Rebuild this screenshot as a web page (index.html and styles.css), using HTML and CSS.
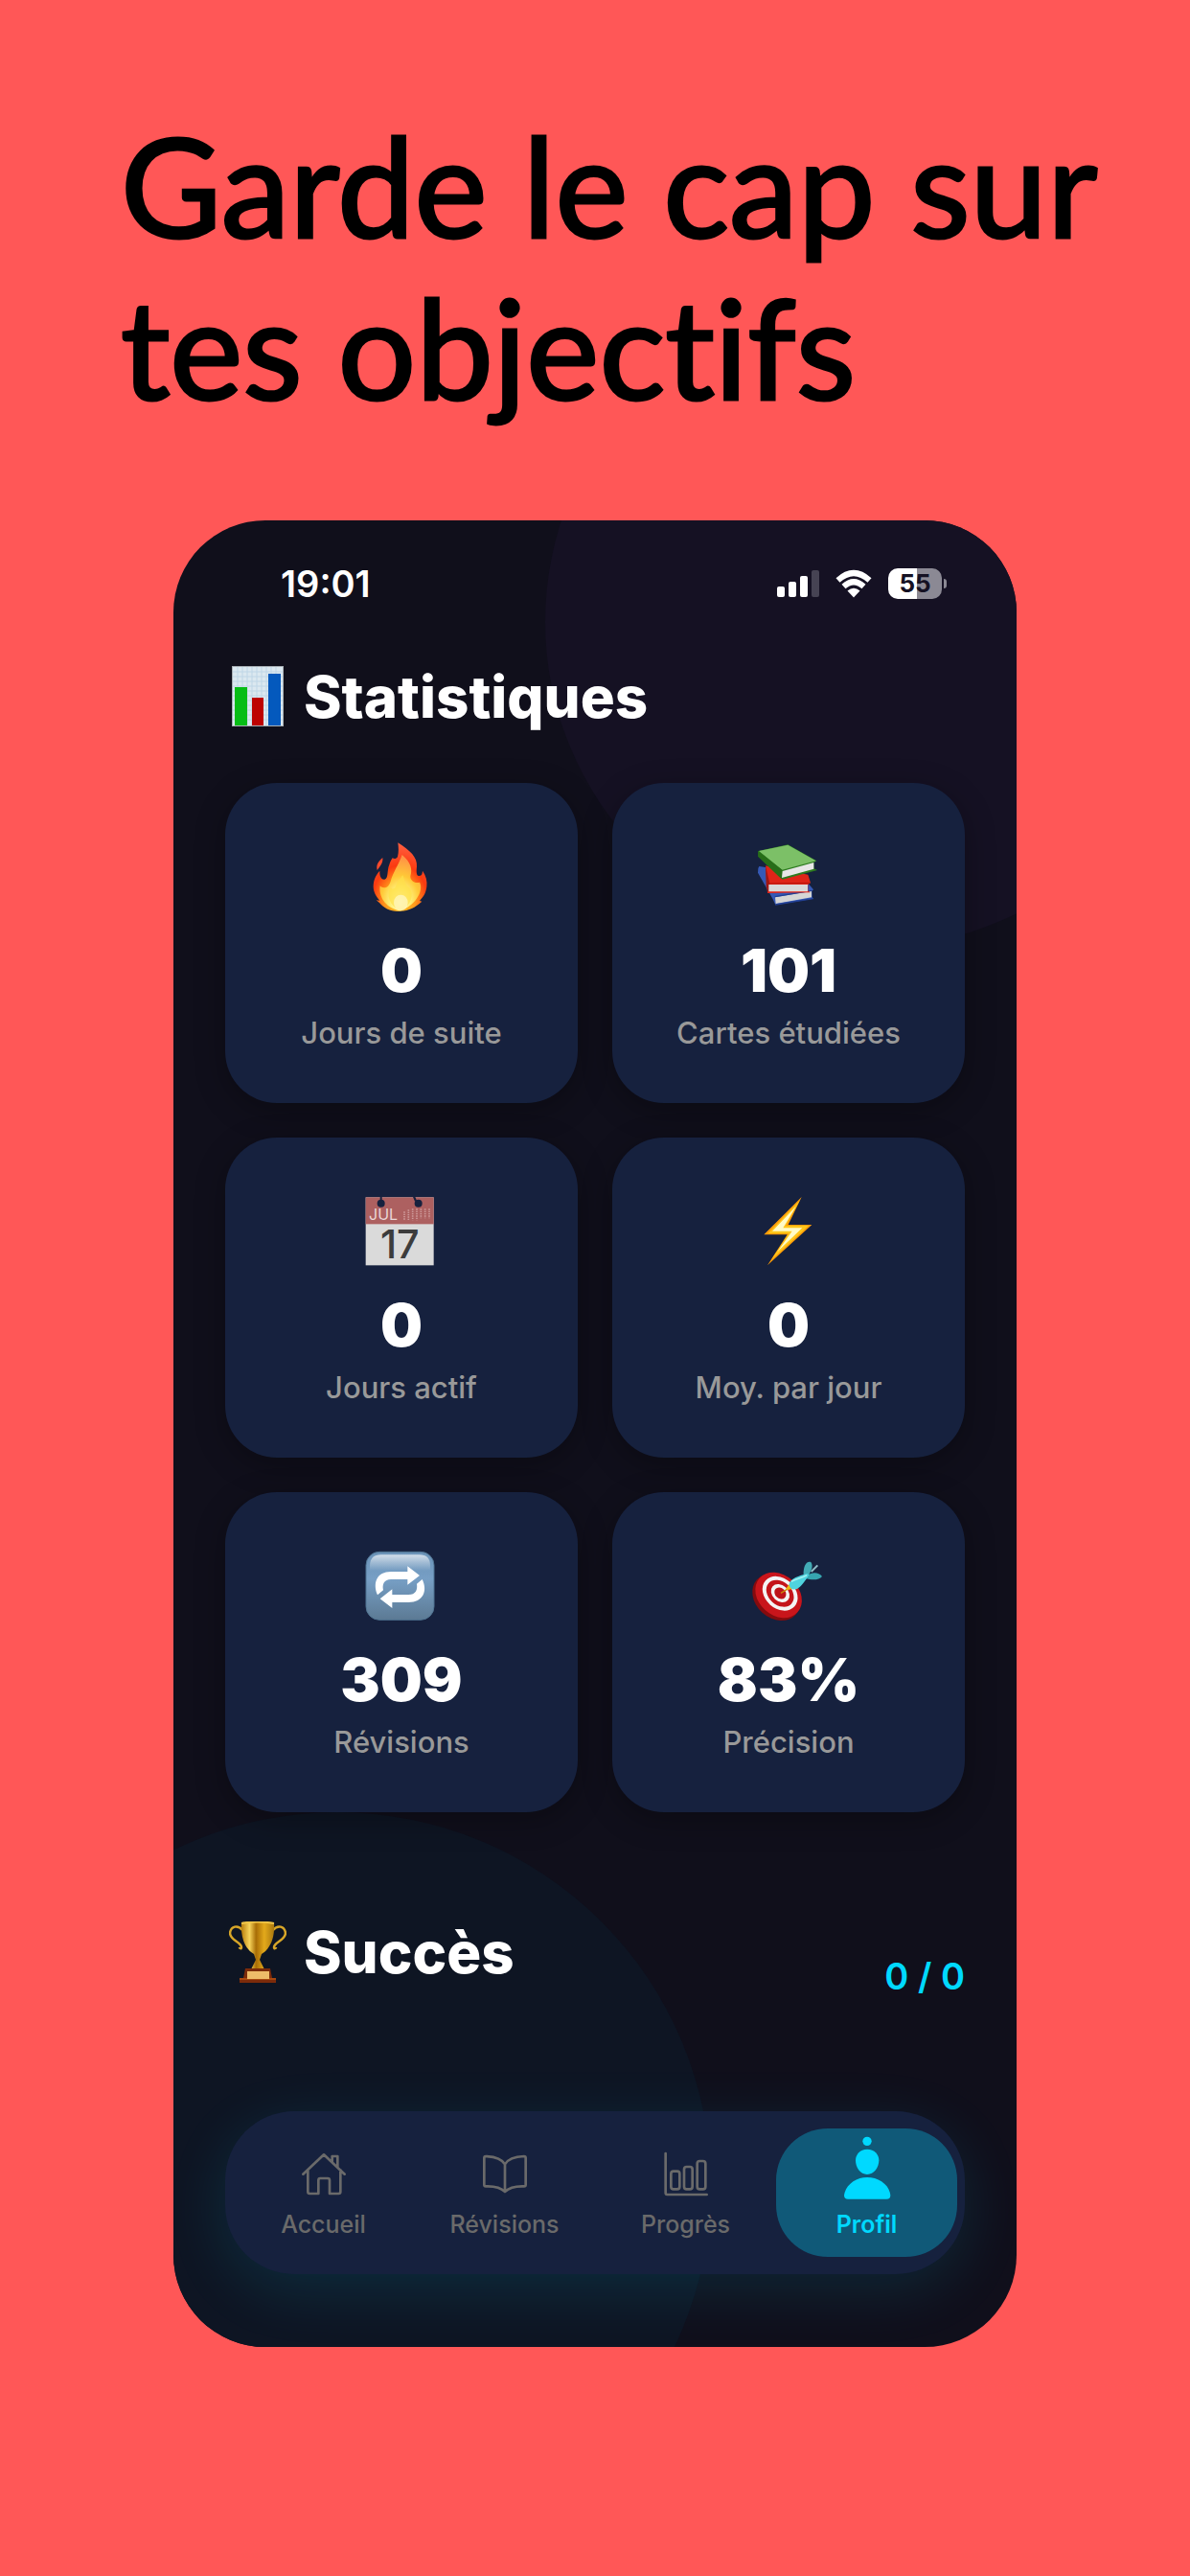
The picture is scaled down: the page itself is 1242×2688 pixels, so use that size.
FILE: index.html
```html
<!DOCTYPE html>
<html lang="fr">
<head>
<meta charset="UTF-8">
<meta name="viewport" content="width=device-width, initial-scale=1.0">
<title>Statistiques</title>
<link rel="stylesheet" href="styles.css">
</head>
<body>
<h1 class="headline">Garde le cap sur<br>tes objectifs</h1>

<main class="phone">
  <div class="status-bar">
    <span class="time">19:01</span>
    <div class="status-icons">
      <svg width="44" height="32" viewBox="0 0 44 32" fill="#fff">
        <rect x="0" y="19" width="8" height="11" rx="2"/>
        <rect x="12" y="14" width="8" height="16" rx="2"/>
        <rect x="24" y="8" width="8" height="22" rx="2"/>
        <rect x="36" y="2" width="8" height="28" rx="2" fill="#464353"/>
      </svg>
      <svg width="38" height="32" viewBox="0 0 38 32">
        <g fill="none" stroke="#fff" stroke-width="6">
          <path d="M2.500 12.500Q19-2.500 35.500 12.500"/>
          <path d="M8.500 19Q19 9.500 29.500 19"/>
        </g>
        <path d="M12.500 23.500Q19 18 25.500 23.500L19 30.500Z" fill="#fff"/>
      </svg>
      <span class="battery">55</span>
    </div>
  </div>

  <section class="stats">
    <h2 class="title">
      <svg class="title-icon" viewBox="0 0 60 64">
        <rect x="3" y="0" width="54" height="63" fill="#a9b0b5"/>
        <rect x="4" y="1" width="52" height="61" fill="#dbe8f0"/>
        <path d="M4 6H56M4 11H56M4 16H56M4 21H56M4 26H56M4 31H56M4 36H56M4 41H56M4 46H56M4 51H56M4 56H56M9 1V62M14 1V62M19 1V62M24 1V62M29 1V62M34 1V62M39 1V62M44 1V62M49 1V62" stroke="#bfd6e6"/>
        <rect x="6" y="22" width="13" height="40" fill="#06bd16"/>
        <rect x="24" y="33" width="12" height="29" fill="#bd0202"/>
        <rect x="41" y="8" width="13" height="54" fill="#0459bd"/>
      </svg>
      Statistiques
    </h2>
    <div class="grid">
      <div class="card">
        <svg class="card-icon" viewBox="490 236 216 216">
          <defs>
            <radialGradient id="flame" cx=".5" cy=".85" r=".8">
              <stop offset="0" stop-color="#ffcc25"/>
              <stop offset=".35" stop-color="#ff9b1c"/>
              <stop offset=".65" stop-color="#fb3a10"/>
              <stop offset="1" stop-color="#ff5b3b"/>
            </radialGradient>
            <radialGradient id="core" cx=".5" cy=".85" r=".8">
              <stop offset="0" stop-color="#fffde0"/>
              <stop offset=".3" stop-color="#fff07a"/>
              <stop offset=".6" stop-color="#ffc837"/>
              <stop offset="1" stop-color="#ff9345"/>
            </radialGradient>
          </defs>
          <path d="M587 237C625 262 648 282 646 312C644 328 645 342 653 341C664 340 663 332 664 325C675 341 679 357 677 375C674 397 667 406 655 419L662 421L653 429C634 445 612 452 587 452C562 452 541 440 529 425L519 417L530 418C518 403 510 391 510 373C511 349 521 335 530 325C529 342 535 353 545 352C558 350 552 324 560 306C563 296 566 291 570 285C575 289 582 288 586 281C590 267 589 252 587 237Z" fill="url(#flame)"/>
          <path d="M539 284C541 300 531 311 522 323C518 306 525 296 539 284Z" fill="#fb4a2c"/>
          <path d="M600 275C628 299 633 320 626 342C625 356 640 366 655 361C669 387 640 438 591 450C546 440 526 404 531 372C543 384 558 377 564 358C571 330 589 307 600 275Z" fill="url(#core)"/>
          <path d="M602 338C609 357 610 370 622 378C639 396 630 434 594 451C559 434 550 398 563 378C571 385 579 380 581 370C586 357 595 350 602 338Z" fill="#ffe04a" opacity=".7"/>
          <ellipse cx="596" cy="425" rx="22" ry="25" fill="#fffbd8" opacity=".6"/>
        </svg>
        <strong class="value">0</strong>
        <span class="label">Jours de suite</span>
      </div>
      <div class="card">
        <svg class="card-icon" viewBox="501 236 216 216">
          <path d="M514 317L517 311L640 330L687 384L682 388L683 408L687 412L568 432L560 414L513 331Z" fill="#3559b5"/>
          <path d="M567 408L681 388V408L569 428Z" fill="#d5d5d5"/>
          <path d="M566 406L681 387M568 431L686 412" stroke="#223f93" stroke-width="4"/>
          <path d="M537 309L670 337L678 363L670 368V388L677 393L543 395Z" fill="#df2418"/>
          <path d="M537 309L550 365L545 393L539 373Z" fill="#9e1712"/>
          <path d="M547 368H669V390H547Z" fill="#d9d9d9"/>
          <path d="M545 365L675 363" stroke="#b8150d" stroke-width="3"/>
          <path d="M514 263L607 243L697 294L688 299L689 318L699 323L590 352L514 280Z" fill="#2d7b20"/>
          <path d="M516 263L607 244L695 294L589 322Z" fill="#7cc067"/>
          <path d="M514 263L589 322L587 351L514 281Z" fill="#276d18"/>
          <path d="M590 326L688 299V319L588 347Z" fill="#e7e7e7"/>
        </svg>
        <strong class="value">101</strong>
        <span class="label">Cartes étudiées</span>
      </div>
      <div class="card">
        <svg class="card-icon" viewBox="490 204 216 216">
          <rect x="486" y="205" width="213" height="213" fill="#dadada"/>
          <rect x="486" y="205" width="213" height="84" fill="#ad6060"/>
          <g fill="#16213e">
            <circle cx="534" cy="224" r="12"/>
            <circle cx="651" cy="224" r="12"/>
            <path d="M531 204H537V216H531ZM634 204H641L646 215L640 218Z"/>
          </g>
          <text x="496" y="276" class="cal-month">JUL</text>
          <path d="M607 250V277M620 244V277M633 241V277M646 241V277M659 241V271M672 241V271M685 241V271" stroke="#cf9b9b" stroke-width="5" stroke-dasharray="4 3"/>
          <text x="593" y="396" class="cal-day">17</text>
        </svg>
        <strong class="value">0</strong>
        <span class="label">Jours actif</span>
      </div>
      <div class="card">
        <svg class="card-icon" viewBox="501 204 216 216">
          <path d="M650 204L532 322H605L543 418L682 291H608Z" fill="#ff9d08"/>
          <path d="M644 215L545 318H610L556 400L672 294H600Z" fill="#ffc61a"/>
          <path d="M632 234L558 311H620L574 376L652 301H592Z" fill="#fffbc8"/>
        </svg>
        <strong class="value">0</strong>
        <span class="label">Moy. par jour</span>
      </div>
      <div class="card">
        <svg class="card-icon" viewBox="490 202 216 216">
          <defs>
            <linearGradient id="tile" x2="0" y2="1">
              <stop offset="0" stop-color="#6b93b8"/>
              <stop offset=".4" stop-color="#779fc5"/>
              <stop offset="1" stop-color="#5c7a94"/>
            </linearGradient>
            <linearGradient id="shine" x2="0" y2="1">
              <stop offset="0" stop-color="#d2deea"/>
              <stop offset="1" stop-color="#d2deea" stop-opacity="0"/>
            </linearGradient>
          </defs>
          <rect x="487" y="203" width="213" height="213" rx="42" fill="url(#tile)" stroke="#4f7391" stroke-width="3"/>
          <path d="M499 262V246Q500 212 534 212H654Q688 212 688 246V262Z" fill="url(#shine)"/>
          <g fill="#fff">
            <path d="M523 338C507 300 521 265 565 265H617V248L655 277L617 306V289H565C544 289 537 304 541 323Z"/>
            <path d="M663 289C681 325 666 361 620 361H569V379L531 350L569 320V337H620C643 337 649 321 646 303Z"/>
          </g>
        </svg>
        <strong class="value">309</strong>
        <span class="label">Révisions</span>
      </div>
      <div class="card">
        <svg class="card-icon" viewBox="501 202 216 216">
          <g transform="rotate(42 575 340)">
            <ellipse cx="575" cy="346" rx="82" ry="66" fill="#850b0e"/>
            <ellipse cx="576" cy="337" rx="80" ry="63" fill="#c9151b"/>
            <ellipse cx="576" cy="330" rx="61" ry="47" fill="#f4f4f4"/>
            <ellipse cx="576" cy="330" rx="48" ry="36" fill="#c4141a"/>
            <ellipse cx="576" cy="329" rx="32" ry="25" fill="#f4f4f4"/>
            <ellipse cx="576" cy="329" rx="20" ry="16" fill="#bd141a"/>
          </g>
          <path d="M585 332L614 314" stroke="#c98a08" stroke-width="4"/>
          <path d="M601 318L611 304L626 318L606 322Z" fill="#f0b90f"/>
          <path d="M680 265L700 245" stroke="#8fbcc6" stroke-width="6"/>
          <path d="M656 277C654 250 664 230 679 235C687 246 681 261 673 273Z" fill="#42abb5"/>
          <path d="M666 278C683 265 703 266 714 280C705 292 682 292 662 286Z" fill="#36a5b0"/>
          <path d="M611 303C615 286 642 278 667 271L674 273L668 283C654 303 642 318 632 320C620 322 611 315 611 303Z" fill="#4fd3de"/>
          <path d="M618 296C633 288 651 284 666 276" stroke="#a1f0f2" stroke-width="5" fill="none"/>
        </svg>
        <strong class="value">83%</strong>
        <span class="label">Précision</span>
      </div>
    </div>
  </section>

  <section class="success">
    <h2 class="title">
      <svg class="title-icon" viewBox="0 0 60 64">
        <defs>
          <linearGradient id="gold">
            <stop offset="0" stop-color="#b87d0c"/>
            <stop offset=".25" stop-color="#f6d35a"/>
            <stop offset=".45" stop-color="#a86d06"/>
            <stop offset=".7" stop-color="#e3a91b"/>
            <stop offset="1" stop-color="#a8770f"/>
          </linearGradient>
        </defs>
        <g fill="none" stroke="#d8a628" stroke-width="2.500">
          <path d="M14 9C9 3 2 5 1 12C1 20 13 21 13 27C13 29 11 28 11 27"/>
          <path d="M46 9C51 3 58 5 59 12C59 20 47 21 47 27C47 29 49 28 49 27"/>
        </g>
        <path d="M13 1Q30-2 47 1C48 16 44 28 34 34L32 40L37 50H23L28 40L26 34C16 28 12 16 13 1Z" fill="url(#gold)"/>
        <path d="M13 2Q30-1 47 2" stroke="#efc548" stroke-width="2" fill="none"/>
        <path d="M17 49H43L45 59H49V64H11V59H15Z" fill="#7c2b0a"/>
        <path d="M11 60H49" stroke="#a8480f" stroke-width="2"/>
        <rect x="19" y="52" width="23" height="8" fill="#eebc69"/>
      </svg>
      Succès
    </h2>
    <span class="count">0 / 0</span>
  </section>

  <nav class="tabs">
    <a class="tab" href="#accueil">
      <svg class="tab-icon" viewBox="431 288 144 144">
        <path d="M438 359L503 298L568 359M453 346V414Q453 420 459 420H486V378Q486 372 492 372H515Q521 372 521 378V420H549Q555 420 555 414V346M529 320V303H546V337"/>
      </svg>
      Accueil
    </a>
    <a class="tab" href="#revisions">
      <svg class="tab-icon" viewBox="998 288 144 144">
        <path d="M1070 328C1059 309 1036 304 1010 303Q1005 303 1005 308V392Q1005 397 1010 397C1038 396 1057 401 1070 414C1083 401 1102 396 1130 397Q1135 397 1135 392V308Q1135 303 1130 303C1104 304 1081 309 1070 328ZM1070 328V414"/>
      </svg>
      Révisions
    </a>
    <a class="tab" href="#progres">
      <svg class="tab-icon" viewBox="214 288 144 144">
        <path d="M222 294V418Q222 423 227 423H351"/>
        <rect x="239" y="350" width="27" height="56" rx="8"/>
        <rect x="280" y="336" width="26" height="70" rx="8"/>
        <rect x="321" y="318" width="26" height="88" rx="8"/>
      </svg>
      Progrès
    </a>
    <a class="tab active" href="#profil">
      <svg class="tab-icon" viewBox="778 288 144 144">
        <circle cx="850" cy="256" r="14"/>
        <path d="M850 281C873 281 887 297 887 316C887 339 871 360 850 360C829 360 814 339 814 316C814 297 828 281 850 281Z"/>
        <path d="M778 425C783 391 816 369 850 369C886 369 919 391 923 425Q923 437 911 437H790Q778 437 778 425Z"/>
      </svg>
      Profil
    </a>
  </nav>
</main>
</body>
</html>
```

FILE: styles.css
```css
* {
  box-sizing: border-box;
}

body {
  margin: 0;
  padding: 108px 48px 238px;
  background-color: #ff5757;
  font-family: Inter, "Liberation Sans", sans-serif;
}

.headline {
  margin: 0 0 97px;
  padding-left: 78px;
  font-family: Lato, sans-serif;
  font-size: 144px;
  font-weight: 400;
  font-variant-ligatures: none;
  line-height: 169px;
  color: #000;
  -webkit-text-stroke: 3px #000;
}

.phone {
  position: relative;
  overflow: hidden;
  max-width: 880px;
  margin: 0 auto;
  padding: 0 54px 76px;
  border-radius: 96px;
  background-color: #100f1b;
  color: #fff;
}

/* decorative circles behind the content */
.phone::before,
.phone::after {
  content: "";
  position: absolute;
  border-radius: 50%;
}

.phone::before {
  top: -234px;
  right: -188px;
  width: 680px;
  height: 680px;
  background-color: #151123;
}

.phone::after {
  left: -219px;
  bottom: -222px;
  width: 780px;
  height: 780px;
  background-color: #0e1523;
}

.status-bar,
.stats,
.success,
.tabs {
  position: relative;
  z-index: 1;
}

.status-bar {
  display: flex;
  justify-content: space-between;
  align-items: center;
  height: 132px;
  padding: 0 24px 0 58px;
}

.time {
  font-size: 38px;
  font-weight: 600;
}

.status-icons {
  display: flex;
  align-items: center;
  gap: 17px;
}

.battery {
  position: relative;
  width: 56px;
  border-radius: 10px;
  background: linear-gradient(to right, #fff 54%, #8b8994 54%);
  color: #151123;
  font-size: 26px;
  font-weight: 700;
  line-height: 32px;
  text-align: center;
}

.battery::after {
  content: "";
  position: absolute;
  right: -5px;
  top: 11px;
  width: 3px;
  height: 10px;
  border-radius: 0 3px 3px 0;
  background-color: #8b8994;
}

.title {
  display: flex;
  align-items: center;
  gap: 18px;
  margin: 0;
  padding-left: 4px;
  font-size: 60px;
  font-weight: 800;
  line-height: 72px;
}

.title-icon {
  width: 60px;
  height: 64px;
}

.stats {
  padding-top: 16px;
}

.grid {
  display: grid;
  grid-template-columns: 1fr 1fr;
  gap: 36px;
  margin-top: 54px;
}

.card {
  display: flex;
  flex-direction: column;
  align-items: center;
  padding: 62px 10px 53px;
  border-radius: 54px;
  background-color: #16213e;
  box-shadow: 0 8px 32px rgba(0, 0, 0, 0.3);
}

.card-icon {
  width: 72px;
  height: 72px;
  overflow: visible;
}

.cal-month {
  font-size: 48px;
  fill: #ead6d6;
}

.cal-day {
  font-size: 124px;
  font-weight: 500;
  text-anchor: middle;
  fill: #3c3c3c;
}

.value {
  margin-top: 24px;
  font-size: 62px;
  font-weight: 900;
  line-height: 76px;
}

.label {
  margin-top: 7px;
  font-size: 31px;
  font-weight: 500;
  line-height: 40px;
  color: #999;
}

.success {
  display: flex;
  justify-content: space-between;
  align-items: flex-end;
  padding-top: 110px;
}

.success .title {
  margin-bottom: 13px;
}

.count {
  font-size: 38px;
  font-weight: 600;
  line-height: 48px;
  color: #00d9ff;
}

.tabs {
  display: grid;
  grid-template-columns: repeat(4, 1fr);
  margin-top: 117px;
  padding: 18px 8px;
  border-radius: 72px;
  background-color: #16213e;
  box-shadow: 0 16px 64px rgba(0, 217, 255, 0.12);
}

.tab {
  display: flex;
  flex-direction: column;
  align-items: center;
  gap: 13px;
  padding: 24px 0 19px;
  border-radius: 54px;
  color: #6a6a6a;
  font-size: 25px;
  font-weight: 500;
  line-height: 30px;
  text-decoration: none;
}

.tab-icon {
  width: 48px;
  height: 48px;
  overflow: visible;
  fill: none;
  stroke: currentColor;
  stroke-width: 8;
  stroke-linecap: round;
  stroke-linejoin: round;
}

.active {
  background-color: #105978;
  color: #00d9ff;
  font-weight: 600;
}

.active .tab-icon {
  fill: currentColor;
  stroke: none;
}
```
